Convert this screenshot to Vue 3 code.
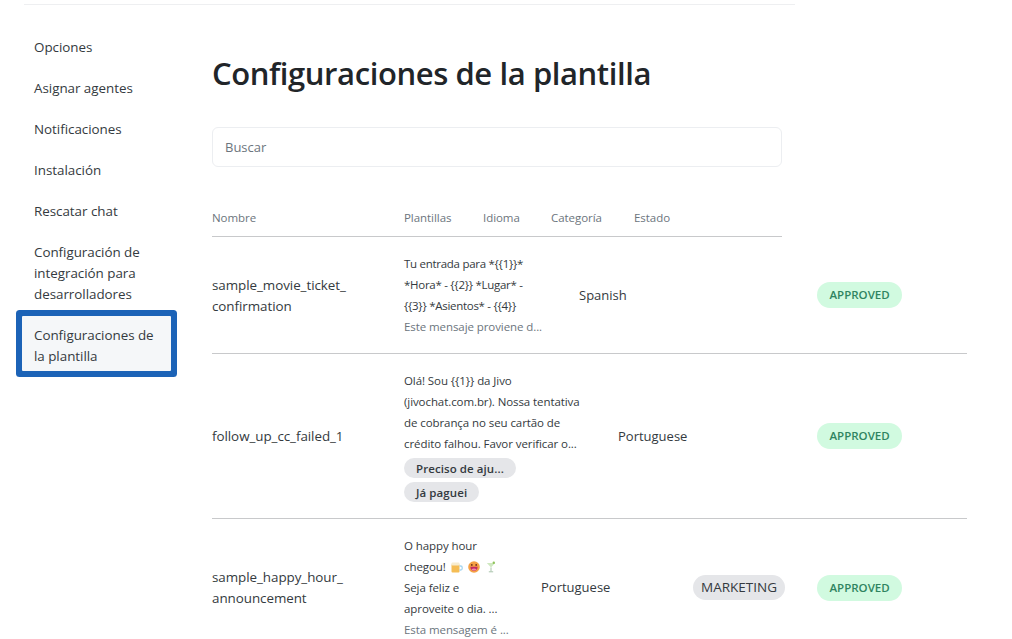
<script setup>
const nav = [
  ['Opciones'],
  ['Asignar agentes'],
  ['Notificaciones'],
  ['Instalación'],
  ['Rescatar chat'],
  ['Configuración de', 'integración para', 'desarrolladores'],
]
const heads = [
  { label: 'Plantillas', cls: 'h-tpl' },
  { label: 'Idioma', cls: 'h-lang' },
  { label: 'Categoría', cls: 'h-cat' },
  { label: 'Estado', cls: 'h-state' },
]
</script>

<template>
  <div class="page">
    <div class="topline"></div>
    <div class="layout">
      <nav class="side">
        <a v-for="(item, i) in nav" :key="i" class="nav-item">
          <template v-for="(l, j) in item" :key="j">{{ l }}<br v-if="j < item.length - 1" /></template>
        </a>
        <a class="nav-item active">Configuraciones de<br />la plantilla</a>
      </nav>
      <main class="content">
        <h1 class="title">Configuraciones de la plantilla</h1>
        <div class="search">Buscar</div>
        <div class="thead">
          <span class="h-name">Nombre</span>
          <span v-for="h in heads" :key="h.label" :class="h.cls">{{ h.label }}</span>
        </div>

        <div class="row r1">
          <div class="name">sample_movie_ticket_<br />confirmation</div>
          <div class="tpl">
            <div class="msg" v-pre>Tu entrada para *{{1}}*<br />*Hora* - {{2}} *Lugar* -<br />{{3}} *Asientos* - {{4}}</div>
            <div class="foot">Este mensaje proviene d...</div>
          </div>
          <div class="lang">Spanish</div>
          <div class="state"><span class="ok">APPROVED</span></div>
        </div>

        <div class="row r2">
          <div class="name">follow_up_cc_failed_1</div>
          <div class="tpl">
            <div v-pre>Olá! Sou {{1}} da Jivo<br />(jivochat.com.br). Nossa tentativa<br />de cobrança no seu cartão de<br />crédito falhou. Favor verificar o...</div>
            <div class="replies">
              <span class="reply">Preciso de aju...</span>
              <span class="reply">Já paguei</span>
            </div>
          </div>
          <div class="lang">Portuguese</div>
          <div class="state"><span class="ok">APPROVED</span></div>
        </div>

        <div class="row r3">
          <div class="name">sample_happy_hour_<br />announcement</div>
          <div class="tpl">
            <div>
              O happy hour<br />chegou!
              <svg class="emoji mug" viewBox="0 0 12 12" width="12" height="12"><rect x="0.5" y="3" width="8" height="8.5" rx="1" fill="#f5bd55"/><rect x="0.5" y="1.5" width="8" height="3" rx="1" fill="#f7ecd0"/><path d="M8.5 5h1.2a1.5 1.5 0 0 1 1.5 1.5v1a1.5 1.5 0 0 1-1.5 1.5H8.500" fill="none" stroke="#a6d5f0" stroke-width="1.3"/></svg>
              <svg class="emoji" viewBox="0 0 12 12" width="12" height="12"><circle cx="6" cy="6" r="5.8" fill="#f5a044"/><circle cx="3.8" cy="3.9" r="0.9" fill="#6b2c1a"/><circle cx="8.2" cy="3.9" r="0.9" fill="#6b2c1a"/><path d="M2.4 5.800h7.200a3.600 4 0 0 1-7.200 0z" fill="#c22a63"/><path d="M3.400 8.400a3 2 0 0 1 5.200 0 3.400 3 0 0 1-5.200 0z" fill="#f08aa8"/></svg>
              <svg class="emoji" viewBox="0 0 12 12" width="12" height="12"><path d="M1.800 2h8.400L6 6.600z" fill="#cfe8c0"/><path d="M6 6.500V10.500M3.800 10.800h4.400" stroke="#a9c4ab" stroke-width="1" fill="none"/><circle cx="8.800" cy="1.800" r="1.200" fill="#8fc45a"/></svg>
              <br />Seja feliz e<br />aproveite o dia. ...
            </div>
            <div class="foot">Esta mensagem é ...</div>
          </div>
          <div class="lang">Portuguese</div>
          <div class="cat"><span class="tag">MARKETING</span></div>
          <div class="state"><span class="ok">APPROVED</span></div>
        </div>
      </main>
    </div>
  </div>
</template>

<style>
html, body { margin: 0; overflow: hidden; background: #fff; }
</style>

<style scoped>
.page {
  width: 1012px;
  height: 639px;
  overflow: hidden;
  padding-top: 4px;
  box-sizing: border-box;
  font-family: "Open Sans", "Noto Sans", sans-serif;
  color: #212529;
  font-size: 13px;
}
.topline { width: 771px; height: 1px; margin-left: 24px; background: #eeeff1; }
.layout { display: flex; }
.side {
  width: 149px;
  margin: 22px 0 0 22px;
  flex: none;
  display: flex;
  flex-direction: column;
}
.nav-item {
  padding: 10px 12px;
  font-size: 13.4px;
  line-height: 21px;
  letter-spacing: -0.03px;
  white-space: nowrap;
  color: #343a40;
}
.nav-item.active {
  margin-top: 1px;
  padding: 9px 12px 4px;
  background: #f5f7f9;
  border-radius: 1px;
  box-shadow: 0 0 0 6px #1c63b7;
}
.content { margin-left: 41px; width: 755px; flex: none; }
.title {
  margin: 0;
  padding-top: 46px;
  font-size: 31px;
  line-height: 44px;
  font-weight: 600;
  letter-spacing: -0.41px;
  color: #212529;
  white-space: nowrap;
}
.search {
  width: 570px;
  height: 40px;
  margin-top: 32px;
  box-sizing: border-box;
  border: 1px solid #eceef1;
  border-radius: 6px;
  padding-left: 12px;
  line-height: 38px;
  color: #6c757d;
}
.thead {
  width: 570px;
  height: 39px;
  margin-top: 30px;
  border-bottom: 1px solid #c8c9cb;
  display: flex;
  font-size: 11.5px;
  line-height: 41px;
  letter-spacing: -0.05px;
  color: #6c757d;
}
.h-name { width: 192px; }
.h-tpl { width: 79px; }
.h-lang { width: 68px; }
.h-cat { width: 83px; }
.row {
  display: flex;
  align-items: center;
  line-height: 21px;
  padding: 16px 0;
  border-bottom: 1px solid #c8c9cb;
  white-space: nowrap;
}
.name { width: 192px; flex: none; font-size: 13.4px; letter-spacing: -0.05px; color: #343a40; }
.r1 .name { padding-top: 1px; }
.tpl { flex: none; font-size: 11.5px; letter-spacing: -0.08px; color: #343a40; }
.msg { letter-spacing: -0.28px; }
.r1 .tpl { width: 175px; }
.r2 .tpl { width: 214px; }
.r3 .tpl { width: 137px; }
.foot { color: #6c757d; }
.replies { display: flex; flex-direction: column; align-items: flex-start; gap: 4px; margin-top: 4px; }
.reply {
  height: 20px;
  line-height: 21px;
  padding: 0 12px;
  border-radius: 10px;
  background: #e5e6e9;
  font-weight: 600;
  letter-spacing: 0.08px;
}
.lang { flex: 1; color: #343a40; }
.cat { flex: none; margin-right: 32px; }
.tag {
  display: block;
  height: 25px;
  line-height: 25px;
  padding: 0 8px;
  font-size: 13.5px;
  border-radius: 13px;
  background: #e5e6e9;
  color: #343a40;
}
.state { width: 150px; flex: none; display: flex; }
.ok {
  height: 26px;
  line-height: 26px;
  padding: 0 12.5px;
  border-radius: 13px;
  background: #d1fae0;
  color: #2f8460;
  font-size: 11.5px;
  font-weight: 600;
}
.emoji { vertical-align: -2px; margin-left: 5px; }
.emoji.mug { margin-left: 2px; }
</style>
